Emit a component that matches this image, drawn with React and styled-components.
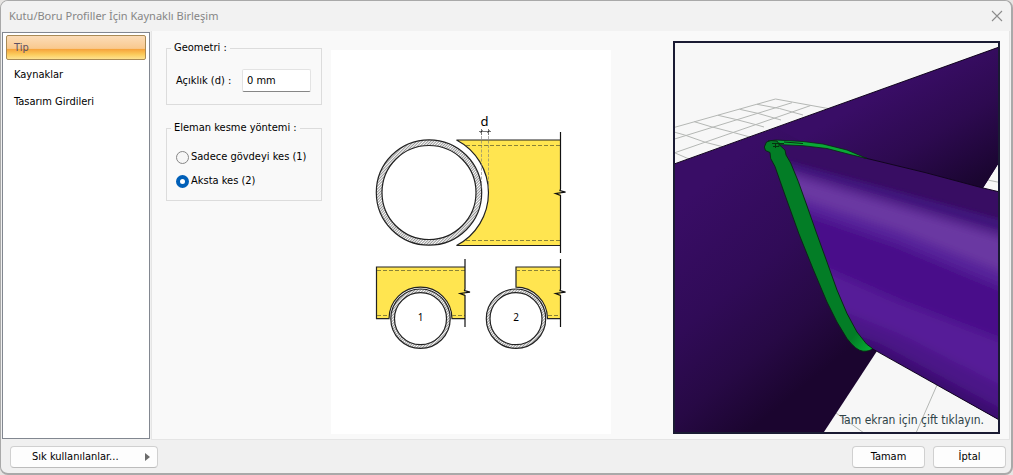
import { useState } from "react";
import styled, { createGlobalStyle } from "styled-components";

const uiFont = '"DejaVu Sans Condensed", "Open Sans", sans-serif';
const lineColor = "#dcdcdc";

const sections = ["Tip", "Kaynaklar", "Tasarım Girdileri"];

const cutMethods = [
  { value: "web", label: "Sadece gövdeyi kes (1)" },
  { value: "axis", label: "Aksta kes (2)" },
];

const BreakLine = ({ x, top, mid, bottom }) => (
  <path
    d={`M${x} ${top}V${mid - 4}l-.5 1.5 5.5 1.6-10 1.4 5 2V${bottom}`}
    fill="none"
    stroke="#111"
    strokeWidth="1.2"
  />
);

const Ring = ({ cx, cy, outer, inner }) => (
  <g stroke="#222" strokeWidth="1.2">
    <circle cx={cx} cy={cy} r={outer} fill="url(#hatch)" />
    <circle cx={cx} cy={cy} r={inner} fill="#fff" />
  </g>
);

const JointDiagram = () => (
  <Diagram viewBox="331 50 280 384" role="img" aria-label="Birleşim şeması">
    <defs>
      <pattern
        id="hatch"
        width="2"
        height="2"
        patternUnits="userSpaceOnUse"
        patternTransform="rotate(45)"
      >
        <rect width="2" height="2" fill="#fff" />
        <rect width="0.7" height="2" fill="#666" />
      </pattern>
    </defs>

    <path
      d="M560.5 140H456.5A59.5 59.5 0 0 1 456.5 245.5H560.5"
      fill="#ffe550"
      stroke="#222"
      strokeWidth="1.2"
    />
    <path
      d="M466 145.5H560M466 240.5H560"
      stroke="#8a8238"
      strokeDasharray="4 2"
    />
    <Ring cx={429} cy={192.5} outer={52.7} inner={47} />
    <path
      d="M481.5 136V190M488.5 136V190"
      stroke="#777"
      strokeWidth="0.6"
      strokeDasharray="3 1.5"
    />
    <path d="M479 131.5H491M481.5 129V135M488.5 129V135" stroke="#555" strokeWidth="0.8" />
    <path d="M480.5 132.5l2-2M487.5 132.5l2-2" stroke="#222" />
    <text x="484.5" y="126" fontSize="13" textAnchor="middle">
      d
    </text>
    <BreakLine x={560.5} top={132} mid={193} bottom={253} />

    <path
      d="M465 267H376.5V318.7H389A31.5 31.5 0 0 1 452 318.7H465"
      fill="#ffe550"
      stroke="#222"
      strokeWidth="1.2"
    />
    <path
      d="M377 270.5H465M377 315.5H389M452 315.5H465"
      stroke="#8a8238"
      strokeDasharray="4 2"
    />
    <Ring cx={420.5} cy={318.7} outer={29.7} inner={26} />
    <BreakLine x={465} top={259} mid={293} bottom={327} />
    <text x="420.5" y="321" fontSize="10" textAnchor="middle">
      1
    </text>

    <path
      d="M560.5 267H516V287.2A31.5 31.5 0 0 1 547.5 318.7H560.5"
      fill="#ffe550"
      stroke="#222"
      strokeWidth="1.2"
    />
    <path
      d="M516 270.5H560M548 315.5H560"
      stroke="#8a8238"
      strokeDasharray="4 2"
    />
    <Ring cx={516} cy={318.7} outer={29.7} inner={26} />
    <BreakLine x={560.5} top={259} mid={293} bottom={327} />
    <text x="516" y="321" fontSize="10" textAnchor="middle">
      2
    </text>
  </Diagram>
);

const tubeOutline =
  "M768 150L776 144 L803 145 L827 147 L850 152 L867 158.5 L925 172.5 L983 188 L1002 192.5 V421.500 L877 351 L871 348 L866 344 L857 332 L847 313 L837 290 L827 262 L816.500 233 L806.700 205 L798 181.500 L790.700 163Z";

const ModelScene = () => (
  <Scene viewBox="675 43 323 389" preserveAspectRatio="xMidYMid slice" aria-hidden="true">
    <defs>
      <linearGradient id="beam" gradientUnits="userSpaceOnUse" x1="720" y1="170" x2="860" y2="340">
        <stop offset="0" stopColor="#390d66" />
        <stop offset="0.45" stopColor="#300b57" />
        <stop offset="0.75" stopColor="#270945" />
        <stop offset="1" stopColor="#1b052f" />
      </linearGradient>
      <linearGradient id="beamBack" gradientUnits="userSpaceOnUse" x1="900" y1="80" x2="965" y2="190">
        <stop offset="0" stopColor="#390d66" />
        <stop offset="0.5" stopColor="#2d0a50" />
        <stop offset="1" stopColor="#1a0530" />
      </linearGradient>
      <linearGradient id="weldTip" gradientUnits="userSpaceOnUse" x1="852" y1="338" x2="870" y2="352">
        <stop offset="0" stopColor="#037d26" />
        <stop offset="1" stopColor="#06b035" />
      </linearGradient>
      <filter id="soft" x="-20%" y="-20%" width="140%" height="140%">
        <feGaussianBlur stdDeviation="5" />
      </filter>
      <filter id="fine" x="-20%" y="-20%" width="140%" height="140%">
        <feGaussianBlur stdDeviation="2" />
      </filter>
      <clipPath id="tubeClip">
        <path d={tubeOutline} />
      </clipPath>
    </defs>

    <rect x="640" y="0" width="400" height="475" fill="#f7f7f7" />

    {/* floor grid */}
    <path
      d="M674 127.500L775.500 99 828 108.500M674 139.200L792 102.700M674 153L810.500 105.600M757 104.300L779.500 108.500 803 115M739.700 109.300L757.700 113.300 781 120M718 115.300L735.300 119.300 756 124.700 764 127M694.300 121.700L711 126.700 732.700 132.300 750 137M674 132L684.700 135 705.300 142.300 722 146.500M674 152.500L689 159M985 179.500L1000 182.500M836 413L864 433M937 385L916 433"
      fill="none"
      stroke="#b4b7b4"
    />

    {/* main beam */}
    <path d="M670 165.500L1002 46V158L983 188 877 351 822 435H670Z" fill="url(#beam)" />
    <path d="M776 128L1002 46V158L983 188 925 172 867 158 803 142Z" fill="url(#beamBack)" />
    <path d="M670 165.500L1002 46" stroke="#12051f" />

    {/* incoming tube */}
    <g clipPath="url(#tubeClip)">
      <rect x="760" y="130" width="245" height="300" fill="#380d63" />
      <g filter="url(#fine)">
        <path d="M784 160L1010 222V440H780Z" fill="#41127a" />
        <path d="M784 167L1010 233V440H780Z" fill="#4c1c82" />
      </g>
      <g filter="url(#soft)">
        <path d="M784 172L1010 239V470H780Z" fill="#6b38a2" />
        <path d="M784 193L900 231 1010 275V470H780Z" fill="#57249a" />
        <path d="M784 205L900 245 1010 291V470H780Z" fill="#4a118a" />
        <path d="M815 265L900 302 1010 344V470H800Z" fill="#571f98" />
        <path d="M815 300L900 334 1010 390V470H800Z" fill="#4b1288" />
        <path d="M815 320L880 344 1010 414V470H800Z" fill="#3b0b70" />
      </g>
    </g>
    <path d="M863 157.500L925 172.500 983 188 1002 192.500M871 348L1002 421.500" fill="none" stroke="#12051f" />

    {/* weld seam */}
    <path
      d="M768 141L776 140 803 141.500 823 144 847 150 867 158.500 850 154.500 827 148.500 803 145.700 778 144.500Z"
      fill="#0aa837"
      stroke="#0a2413"
      strokeWidth="0.8"
    />
    <path
      d="M771 140.500L766.500 142 764.300 147 765.500 150.500 770 152.500 770.700 158.500 775 166.500 785 195 799 234 813.500 270 827 302 837 322 847 338.500 Q856 350.500 863 351.200 Q870 351.500 872.500 348.500 L866.500 344 857 332 847 313.500 837 290 827 262 816.500 233 806.700 205 798.300 181.500 790.700 163 786 155 785 150 780 145.500 777 141Z"
      fill="url(#weldTip)"
      stroke="#0a2413"
      strokeWidth="0.9"
    />
    <path
      d="M772 143.500H784M773 146.500H779V142.500M775.500 143V148M784 142L803 143.500"
      fill="none"
      stroke="#06310f"
    />
  </Scene>
);

const App = () => {
  const [section, setSection] = useState("Tip");
  const [gap, setGap] = useState("0 mm");
  const [method, setMethod] = useState("axis");

  return (
    <>
      <GlobalStyle />
      <Dialog>
        <TitleBar>
          <Title>Kutu/Boru Profiller İçin Kaynaklı Birleşim</Title>
          <CloseButton type="button" aria-label="Kapat">
            <svg width="12" height="12" viewBox="0 0 12 12">
              <path d="M1 1l10 10M11 1L1 11" stroke="#8c8c8c" strokeWidth="1.1" />
            </svg>
          </CloseButton>
        </TitleBar>

        <Body>
          <Sidebar>
            {sections.map((name) => (
              <SidebarItem
                key={name}
                type="button"
                $active={name === section}
                onClick={() => setSection(name)}
              >
                {name}
              </SidebarItem>
            ))}
          </Sidebar>

          <Panel>
            <Options>
              <Group>
                <Legend>Geometri :</Legend>
                <Field>
                  <label htmlFor="gap">Açıklık (d) :</label>
                  <Input
                    id="gap"
                    type="text"
                    value={gap}
                    onChange={(e) => setGap(e.target.value)}
                  />
                </Field>
              </Group>
              <Group>
                <Legend>Eleman kesme yöntemi :</Legend>
                <RadioList>
                  {cutMethods.map(({ value, label }) => (
                    <RadioLabel key={value}>
                      <Radio
                        type="radio"
                        name="method"
                        value={value}
                        checked={method === value}
                        onChange={() => setMethod(value)}
                      />
                      {label}
                    </RadioLabel>
                  ))}
                </RadioList>
              </Group>
            </Options>

            <DiagramBox>
              <JointDiagram />
            </DiagramBox>

            <Viewer>
              <ModelScene />
              <ViewerHint>Tam ekran için çift tıklayın.</ViewerHint>
            </Viewer>
          </Panel>
        </Body>

        <Footer>
          <FavoritesButton type="button">
            Sık kullanılanlar...
            <svg width="5" height="8" viewBox="0 0 5 8">
              <path d="M0 0l5 4-5 4z" fill="#6b6b6b" />
            </svg>
          </FavoritesButton>
          <Actions>
            <Button type="button">Tamam</Button>
            <Button type="button">İptal</Button>
          </Actions>
        </Footer>
      </Dialog>
    </>
  );
};

export default App;

const GlobalStyle = createGlobalStyle`
  * {
    box-sizing: border-box;
  }

  body {
    margin: 0;
    background: #e6e4e2;
    color: #000;
    font-family: ${uiFont};
    font-size: 11px;
    line-height: 14px;
  }

  button,
  input {
    font: inherit;
    color: inherit;
  }
`;

const Dialog = styled.div`
  display: flex;
  flex-direction: column;
  min-height: 100vh;
  background: #f0f0f0;
  border: 1px solid #a9a9a9;
  border-width: 1px 2px 2px 1px;
  border-radius: 8px;
  overflow: hidden;
`;

const TitleBar = styled.header`
  display: flex;
  align-items: center;
  justify-content: space-between;
  height: 30px;
  padding: 0 8px;
  background: #f2f2f2;
`;

const Title = styled.h1`
  margin: 0;
  color: #868686;
  font-family: "Noto Sans", sans-serif;
  font-size: 11px;
  font-weight: 400;
`;

const CloseButton = styled.button`
  display: flex;
  padding: 0;
  border: none;
  background: none;
`;

const Body = styled.main`
  display: flex;
  flex: 1;
  padding-right: 1px;
`;

const Sidebar = styled.nav`
  display: flex;
  flex-direction: column;
  gap: 2px;
  width: 148px;
  margin: 1px;
  padding: 2px 3px;
  border: 1px solid #828790;
  background: #fff;
`;

const SidebarItem = styled.button`
  height: 25px;
  padding: 1px 7px 0;
  text-align: left;
  color: ${(props) => (props.$active ? "#5c5064" : "#000")};
  border: 1px solid ${(props) => (props.$active ? "#a98a55" : "transparent")};
  border-radius: 2px;
  background: ${(props) =>
    props.$active
      ? "linear-gradient(#fbdcb8, #f9c98e 54%, #f6a43c 58%, #fbcb5c 80%, #fee390)"
      : "none"};
`;

const Panel = styled.div`
  display: flex;
  flex: 1;
  min-width: 0;
  padding: 10px 9px 5px 14px;
  border: 1px solid #e5e5e5;
  border-top: none;
  background: #f9f9f9;
`;

const Options = styled.form`
  display: flex;
  flex: 0 0 156px;
  flex-direction: column;
  gap: 16px;
`;

const Group = styled.fieldset`
  min-width: 0;
  margin: 0;
  padding: 14px 9px 12px;
  border: 1px solid ${lineColor};
`;

const Legend = styled.legend`
  margin-left: -5px;
  padding: 0 3px;
`;

const Field = styled.div`
  display: flex;
  align-items: center;
  justify-content: space-between;
  padding-right: 1px;
`;

const Input = styled.input`
  width: 69px;
  height: 23px;
  padding: 0 4px;
  border: 1px solid #e3e3e3;
  border-bottom-color: #868686;
  border-radius: 2px;
  background: #fff;
`;

const RadioList = styled.div`
  display: flex;
  flex-direction: column;
  gap: 10px;
  padding-top: 1px;
`;

const RadioLabel = styled.label`
  display: flex;
  align-items: center;
  gap: 2px;
  white-space: nowrap;
`;

const Radio = styled.input`
  appearance: none;
  width: 13px;
  height: 13px;
  margin: 0;
  border: 1px solid #868686;
  border-radius: 50%;
  background: #f6f6f6;

  &:checked {
    border: 4px solid #005fb8;
    background: #fff;
  }
`;

const DiagramBox = styled.div`
  flex: 0 0 280px;
  margin: 9px 0 0 9px;
  background: #fff;
`;

const Diagram = styled.svg`
  display: block;
  width: 100%;
  font-family: "Noto Sans", sans-serif;
`;

const Viewer = styled.div`
  position: relative;
  flex: 1;
  margin-left: 62px;
  border: 2px solid #1a1b33;
  overflow: hidden;
`;

const Scene = styled.svg`
  position: absolute;
  inset: 0;
  width: 100%;
  height: 100%;
`;

const ViewerHint = styled.span`
  position: absolute;
  right: 14px;
  bottom: 5px;
  color: #2f4347;
  font-size: 12px;
`;

const Footer = styled.footer`
  display: flex;
  align-items: center;
  justify-content: space-between;
  height: 33px;
  padding: 0 5px 0 9px;
`;

const Actions = styled.div`
  display: flex;
  gap: 8px;
`;

const Button = styled.button`
  width: 73px;
  height: 22px;
  padding: 1px 0 0;
  border: 1px solid #d0d0d0;
  border-bottom-color: #bcbcbc;
  border-radius: 4px;
  background: #fdfdfd;
`;

const FavoritesButton = styled(Button)`
  display: flex;
  align-items: center;
  justify-content: space-between;
  width: 148px;
  padding: 1px 7px 0 21px;
`;
